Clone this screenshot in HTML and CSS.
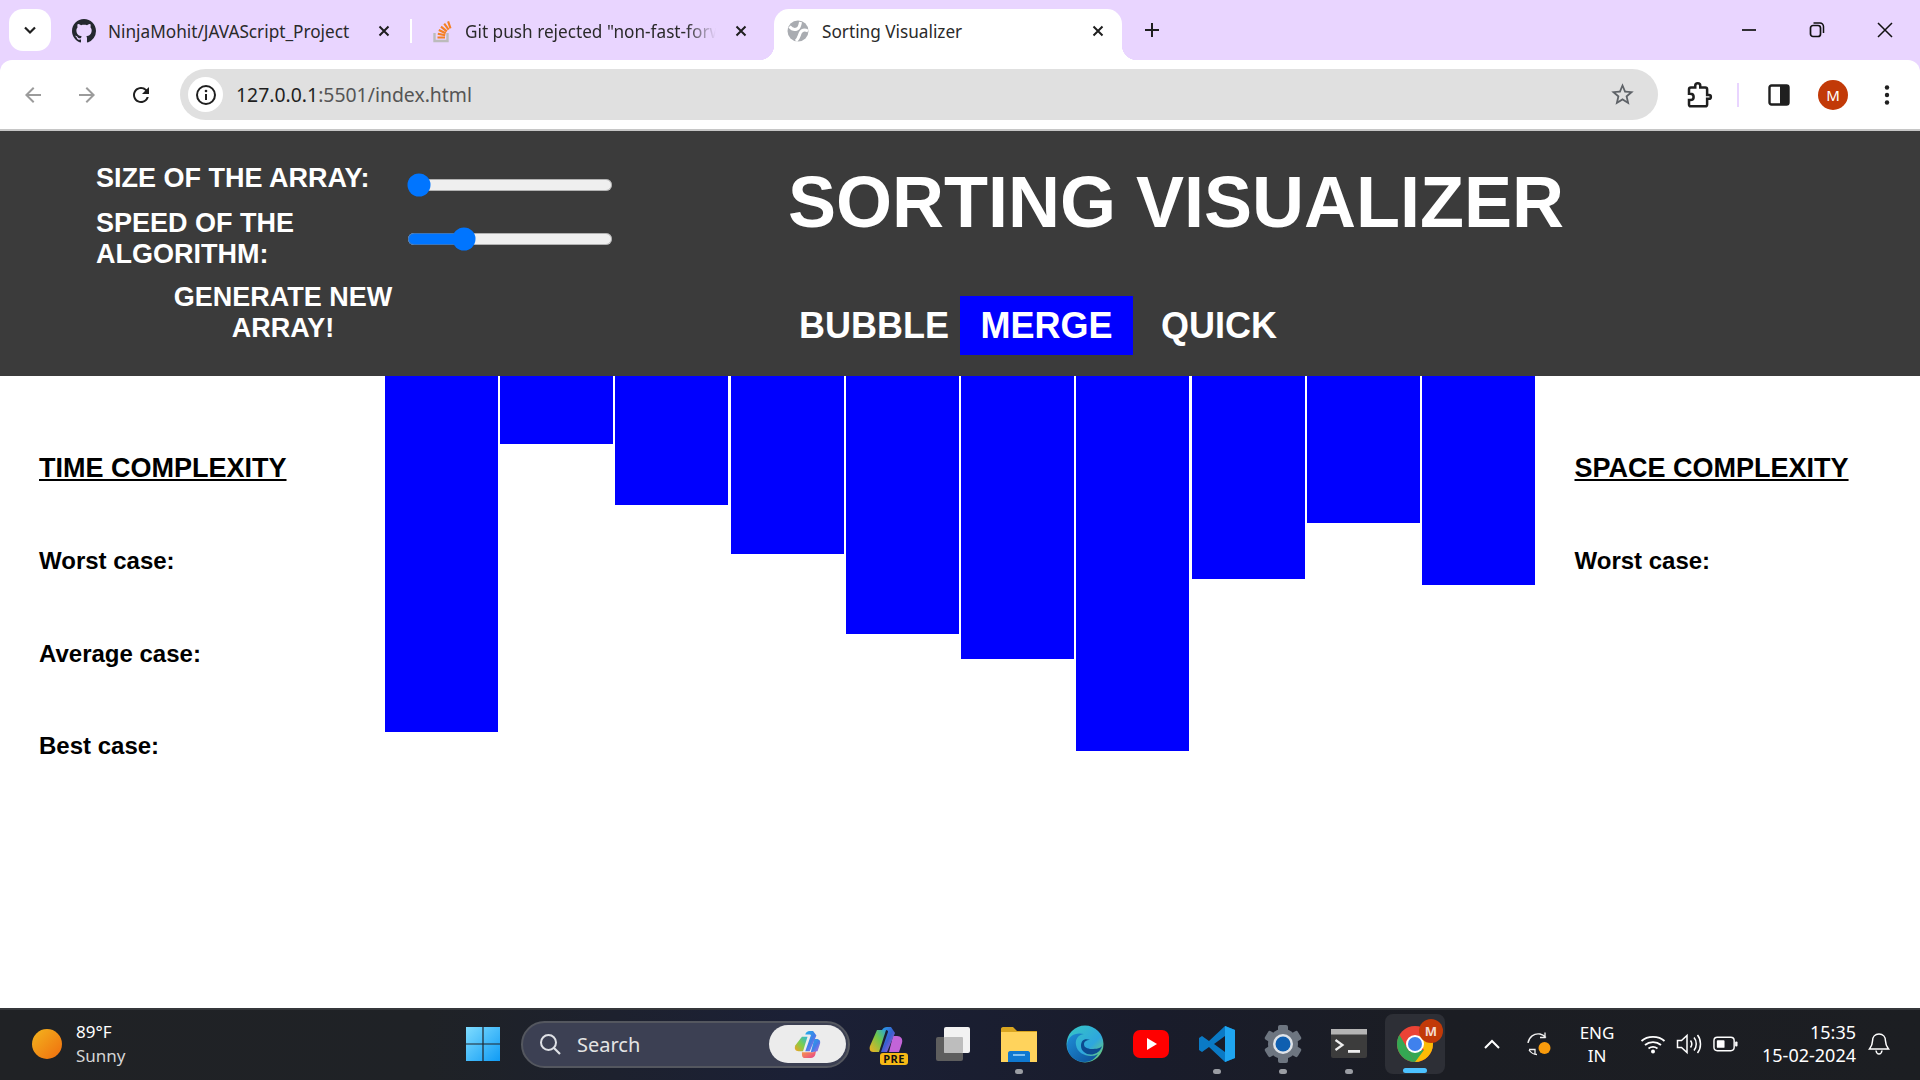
FILE: index.html
```html
<!DOCTYPE html>
<html lang="en">
<head>
<meta charset="utf-8">
<title>Sorting Visualizer</title>
<link rel="stylesheet" href="styles.css">
</head>
<body>
<div class="window">
  <div class="tabstrip">
    <button class="tab-search"><svg class="ic-16" viewBox="0 0 16 16"><path d="M3 5.500 8 10.500 13 5.500" fill="none" stroke="#1f1f1f" stroke-width="2.200"/></svg></button>
    <div class="tab tab-one">
      <svg class="favicon-gh" viewBox="0 0 16 16"><path fill="#24292f" d="M8 0C3.58 0 0 3.58 0 8c0 3.54 2.29 6.53 5.47 7.59.4.07.55-.17.55-.38 0-.19-.01-.82-.01-1.49-2.01.37-2.53-.49-2.69-.94-.09-.23-.48-.94-.82-1.13-.28-.15-.68-.52-.01-.53.63-.01 1.08.58 1.23.82.72 1.21 1.87.87 2.33.66.07-.52.28-.87.51-1.07-1.78-.2-3.64-.89-3.64-3.95 0-.87.31-1.59.82-2.15-.08-.2-.36-1.02.08-2.12 0 0 .67-.21 2.2.82.64-.18 1.32-.27 2-.27.68 0 1.36.09 2 .27 1.53-1.04 2.2-.82 2.2-.82.44 1.1.16 1.92.08 2.12.51.56.82 1.27.82 2.15 0 3.07-1.87 3.75-3.65 3.95.29.25.54.73.54 1.48 0 1.07-.01 1.93-.01 2.2 0 .21.15.46.55.38A8.013 8.013 0 0016 8c0-4.42-3.58-8-8-8z"/></svg>
      <span class="tab-title">NinjaMohit/JAVAScript_Project</span>
      <svg class="tab-close" viewBox="0 0 12 12"><path d="M1.500 1.500 10.500 10.500M10.500 1.500 1.500 10.500" stroke="#1f1f1f" stroke-width="2"/></svg>
    </div>
    <div class="tab tab-two">
      <svg class="favicon-so" viewBox="0 0 20 24"><path d="M3 14v8h13v-8" fill="none" stroke="#bcbbbb" stroke-width="2.400"/><path d="M6 18.500h7.500M6.300 14.800l7.400 1.500M7.300 11l6.900 3.200M9.500 7.600l5.800 4.800M12.700 4.600l4.400 6M16.600 2.300l2.400 7" stroke="#f48024" stroke-width="2.100" fill="none"/></svg>
      <span class="tab-title tab-title-fade">Git push rejected "non-fast-forward"</span>
      <svg class="tab-close" viewBox="0 0 12 12"><path d="M1.500 1.500 10.500 10.500M10.500 1.500 1.500 10.500" stroke="#1f1f1f" stroke-width="2"/></svg>
    </div>
    <div class="tab tab-active">
      <svg class="favicon-globe" viewBox="0 0 22 22"><circle cx="11" cy="11" r="10.500" fill="#a9acb1"/><path d="M2.500 6.500c2.500 3 5 3.500 7.500 2.500s3-3.500 3.500-7M21 11c-3-1.500-6-1-7.500 1.500S12.500 17.500 9 21" fill="none" stroke="#fff" stroke-width="3"/></svg>
      <span class="tab-title">Sorting Visualizer</span>
      <svg class="tab-close" viewBox="0 0 12 12"><path d="M1.500 1.500 10.500 10.500M10.500 1.500 1.500 10.500" stroke="#1f1f1f" stroke-width="2"/></svg>
    </div>
    <button class="new-tab"><svg class="ic-16" viewBox="0 0 16 16"><path d="M8 1v14M1 8h14" stroke="#1f1f1f" stroke-width="2"/></svg></button>
    <div class="win-controls">
      <span class="win-btn"><svg class="ic-16" viewBox="0 0 16 16"><path d="M1 8h14" stroke="#111" stroke-width="1.700"/></svg></span>
      <span class="win-btn"><svg class="ic-16" viewBox="0 0 16 16"><rect x="1.500" y="3.500" width="10" height="11" rx="2.500" fill="none" stroke="#111" stroke-width="1.700"/><path d="M4.500 1h6.500a3.500 3.500 0 0 1 3.500 3.500V11" fill="none" stroke="#111" stroke-width="1.500"/></svg></span>
      <span class="win-btn"><svg class="ic-16" viewBox="0 0 16 16"><path d="M1 1 15 15M15 1 1 15" stroke="#111" stroke-width="1.500"/></svg></span>
    </div>
  </div>

  <div class="toolbar">
    <span class="tool-btn"><svg class="ic-24" viewBox="0 0 24 24"><path fill="#9b9b9b" d="M20 11H7.830l5.590-5.590L12 4l-8 8 8 8 1.410-1.410L7.830 13H20v-2z"/></svg></span>
    <span class="tool-btn"><svg class="ic-24" viewBox="0 0 24 24"><path fill="#9b9b9b" d="M4 11h12.170l-5.590-5.590L12 4l8 8-8 8-1.410-1.410L16.170 13H4v-2z"/></svg></span>
    <span class="tool-btn"><svg class="ic-24" viewBox="0 0 24 24"><path fill="#1f1f1f" d="M17.650 6.350A7.958 7.958 0 0012 4c-4.420 0-7.990 3.580-7.990 8s3.570 8 7.990 8c3.730 0 6.840-2.550 7.730-6h-2.080A5.990 5.990 0 0112 18c-3.310 0-6-2.690-6-6s2.690-6 6-6c1.660 0 3.140.690 4.220 1.780L13 11h7V4l-2.350 2.350z"/></svg></span>
    <div class="omnibox">
      <span class="site-info"><svg class="ic-22" viewBox="0 0 22 22"><circle cx="11" cy="11" r="9" fill="none" stroke="#1f1f1f" stroke-width="2"/><path d="M11 10v6" stroke="#1f1f1f" stroke-width="2"/><circle cx="11" cy="7" r="1.300" fill="#1f1f1f"/></svg></span>
      <span class="url"><span class="url-host">127.0.0.1</span>:5501/index.html</span>
      <svg class="ic-star" viewBox="0 0 24 24"><path fill="#5f6368" d="M22 9.240l-7.190-.620L12 2 9.190 8.630 2 9.240l5.460 4.730L5.820 21 12 17.270 18.180 21l-1.630-7.030L22 9.240zM12 15.400l-3.760 2.270 1-4.280-3.320-2.880 4.380-.380L12 6.100l1.710 4.040 4.380.380-3.320 2.880 1 4.280L12 15.400z"/></svg>
    </div>
    <span class="tool-btn"><svg class="ic-28" viewBox="0 0 24 24"><path fill="none" stroke="#1f1f1f" stroke-width="2" d="M20 12h-1.500V7.500c0-.8-.7-1.500-1.500-1.500h-4V4.500a2 2 0 0 0-4 0V6H5.500C4.700 6 4 6.700 4 7.500V11h1c1.500 0 2.700 1 2.700 2.500S6.500 16 5 16H4v3.500c0 .8.700 1.500 1.500 1.500H17c.8 0 1.500-.7 1.500-1.500V15H20a1.500 1.500 0 0 0 0-3z"/></svg></span>
    <span class="tool-sep"></span>
    <span class="tool-btn"><svg class="ic-24" viewBox="0 0 24 24"><rect x="2.500" y="2.500" width="19" height="19" rx="2" fill="none" stroke="#1f1f1f" stroke-width="2.400"/><rect x="13" y="3" width="8" height="18" fill="#1f1f1f"/></svg></span>
    <span class="tool-btn"><span class="avatar">M</span></span>
    <span class="tool-btn"><svg class="ic-24" viewBox="0 0 24 24"><circle cx="12" cy="4.500" r="2.200" fill="#1f1f1f"/><circle cx="12" cy="12" r="2.200" fill="#1f1f1f"/><circle cx="12" cy="19.500" r="2.200" fill="#1f1f1f"/></svg></span>
  </div>

  <header class="app-header">
    <div class="controls">
      <label class="ctl-label" for="size">SIZE OF THE ARRAY:</label>
      <input class="ctl-range ctl-range-size" id="size" type="range" min="0" max="100" value="0">
      <label class="ctl-label" for="speed">SPEED OF THE ALGORITHM:</label>
      <input class="ctl-range ctl-range-speed" id="speed" type="range" min="0" max="100" value="25">
      <button class="generate">GENERATE NEW ARRAY!</button>
    </div>
    <div class="center">
      <h1 class="title">SORTING VISUALIZER</h1>
      <nav class="algos">
        <button class="algo">BUBBLE</button>
        <button class="algo algo-active">MERGE</button>
        <button class="algo">QUICK</button>
      </nav>
    </div>
  </header>

  <main class="stage">
    <section class="stats stats-left">
      <h3 class="stats-title">TIME COMPLEXITY</h3>
      <p class="stats-row">Worst case:</p>
      <p class="stats-row">Average case:</p>
      <p class="stats-row">Best case:</p>
    </section>
    <section class="bars">
      <div class="bar" style="height:356px"></div>
      <div class="bar" style="height:68px"></div>
      <div class="bar" style="height:129px"></div>
      <div class="bar" style="height:178px"></div>
      <div class="bar" style="height:258px"></div>
      <div class="bar" style="height:283px"></div>
      <div class="bar" style="height:375px"></div>
      <div class="bar" style="height:203px"></div>
      <div class="bar" style="height:147px"></div>
      <div class="bar" style="height:209px"></div>
    </section>
    <section class="stats stats-right">
      <h3 class="stats-title">SPACE COMPLEXITY</h3>
      <p class="stats-row">Worst case:</p>
    </section>
  </main>

  <footer class="taskbar">
    <div class="weather">
      <span class="sun"></span>
      <div class="weather-text"><span class="temp">89°F</span><span class="cond">Sunny</span></div>
    </div>
    <span class="task-cell"><svg class="ic-36" viewBox="0 0 36 36"><defs><linearGradient id="winA" x1="0" y1="0" x2="1" y2="1"><stop offset="0" stop-color="#7fdcff"/><stop offset="1" stop-color="#0f9bf5"/></linearGradient></defs><path fill="url(#winA)" d="M1 1h16.400v16.400H1zM18.600 1H35v16.400H18.600zM1 18.600h16.400V35H1zM18.600 18.600H35V35H18.600z"/></svg></span>
    <div class="search">
      <svg class="ic-search" viewBox="0 0 24 24"><circle cx="10.500" cy="10.500" r="7.500" fill="none" stroke="#dfe1e6" stroke-width="2"/><path d="M16 16l6 6" stroke="#dfe1e6" stroke-width="2.200"/></svg>
      <span class="search-text">Search</span>
      <span class="copilot-pill"><svg class="ic-copilot" viewBox="0 0 26 26"><defs><linearGradient id="cpA" x1="0" y1="0" x2="1" y2="1"><stop offset="0" stop-color="#1fb0ec"/><stop offset=".5" stop-color="#3f7fe8"/><stop offset="1" stop-color="#c95fe0"/></linearGradient><linearGradient id="cpB" x1="0" y1="1" x2="1" y2="0"><stop offset="0" stop-color="#f5a01f"/><stop offset=".5" stop-color="#7ccf4c"/><stop offset="1" stop-color="#2ab5dd"/></linearGradient><linearGradient id="cpC" x1="0" y1="0" x2="1" y2="1"><stop offset="0" stop-color="#f8a83d"/><stop offset="1" stop-color="#e8408e"/></linearGradient></defs><path fill="url(#cpB)" d="M8 6h5l-4 13H5C2 19 1 17 2 14z"/><path fill="url(#cpC)" d="M8 20h9c2 0 3-1 4-3l-1 5c-.5 2-2 3-4 3h-6c-2 0-2-3-2-5z"/><path fill="url(#cpA)" d="M19 8h2c3 0 4 2 3 5l-2 6-6 1z"/><path fill="url(#cpA)" d="M11 4c.5-1.500 2-3 4-3h3l3 4-6 14h-4l5-14c.3-1-.5-1-2-1z"/></svg></span>
    </div>
    <span class="task-cell"><span class="copilot-pre"><svg class="ic-36" viewBox="0 0 36 36"><defs><linearGradient id="cp2A" x1="0" y1="0" x2="1" y2="1"><stop offset="0" stop-color="#22a7ea"/><stop offset=".5" stop-color="#3a5fd0"/><stop offset="1" stop-color="#c65fdc"/></linearGradient><linearGradient id="cp2B" x1="0" y1="1" x2="1" y2="0"><stop offset="0" stop-color="#f5b01f"/><stop offset=".6" stop-color="#6cc74c"/><stop offset="1" stop-color="#2aa5dd"/></linearGradient></defs><path fill="url(#cp2B)" d="M8 4h9L10 26H4C1 26 0 23 1 20z"/><path fill="#c264d8" d="M24 10h4c4 0 6 3 5 7l-3 9H20z"/><path fill="url(#cp2A)" d="M13 4c1-2 3-3 5-3h4l4 6-8 19h-6l7-20c.3-1-.500-2-2-2z"/></svg><span class="pre-badge">PRE</span></span></span>
    <span class="task-cell"><svg class="ic-36" viewBox="0 0 36 36"><rect x="1" y="11" width="27" height="24" rx="2" fill="#5e5e5e"/><rect x="9" y="1" width="26" height="26" rx="2" fill="#f2f2f2"/><rect x="9" y="11" width="19" height="16" rx="1" fill="#bdbdbd"/></svg></span>
    <span class="task-cell task-open"><svg class="ic-36" viewBox="0 0 36 36"><path fill="#d9a520" d="M0 3c0-1 .700-2 2-2h10l4 4h20v6H0z"/><path fill="#ffd35c" d="M0 6h36v30H0z"/><path fill="#0f78d0" d="M7 36V27c0-1 1-2 2-2h18c1 0 2 1 2 2v9z"/><rect x="12" y="28" width="12" height="2" fill="#7fc0f0"/></svg></span>
    <span class="task-cell"><svg class="ic-38" viewBox="0 0 38 38"><defs><linearGradient id="edA" x1="0" y1="0" x2="1" y2="1"><stop offset="0" stop-color="#37c8c2"/><stop offset=".6" stop-color="#2ea6de"/><stop offset="1" stop-color="#7ed957"/></linearGradient><linearGradient id="edB" x1="0" y1="0" x2="1" y2="1"><stop offset="0" stop-color="#1f8fd8"/><stop offset="1" stop-color="#0c4f97"/></linearGradient></defs><circle cx="19" cy="19" r="18.500" fill="url(#edA)"/><path fill="url(#edB)" d="M1 20C2 10 10 7 18 9c-6 1-9 5-8 11 1 7 8 11 15 11 3 0 5-1 7-2-3 5-8 8-13 8C9 37 1 30 1 20z"/><path fill="#0c4a8f" d="M36 21c-2 3-8 3-12 3-4-1-6-2-6-5 0-2 2-4 6-4-6-2-9 1-9 6 0 6 7 10 13 8 4-1 7-4 8-8z"/></svg></span>
    <span class="task-cell"><svg class="ic-36" viewBox="0 0 36 28"><rect x="0" y="0" width="36" height="28" rx="7" fill="#f00"/><path d="M14 8v12l10-6z" fill="#fff"/></svg></span>
    <span class="task-cell task-open"><svg class="ic-36" viewBox="0 0 36 36"><path fill="#0a7ac5" d="M26 0 10 15 3 10 0 12v12l3 2 7-5 16 15 10-4V4zM26 10v16l-11-8z"/><path fill="#1fa5f0" d="M26 0l10 4v28l-10 4z"/></svg></span>
    <span class="task-cell task-open"><svg class="ic-38" viewBox="0 0 38 38"><g fill="#6d7580"><circle cx="19" cy="19" r="15"/><rect x="14" y="0" width="10" height="38" rx="2"/><rect x="14" y="0" width="10" height="38" rx="2" transform="rotate(60 19 19)"/><rect x="14" y="0" width="10" height="38" rx="2" transform="rotate(120 19 19)"/></g><circle cx="19" cy="19" r="10" fill="#dfe3e8"/><circle cx="19" cy="19" r="7.500" fill="#0f5fb0"/></svg></span>
    <span class="task-cell task-open"><svg class="ic-36" viewBox="0 0 36 30"><rect width="36" height="29" rx="2" fill="#3c3c3c"/><rect width="36" height="5.500" fill="#b4b4b4"/><path d="M4.500 11l7 5-7 5" fill="none" stroke="#eee" stroke-width="2.200"/><rect x="17" y="21" width="12" height="2.800" fill="#eee"/></svg></span>
    <span class="task-cell task-chrome">
      <svg class="ic-38" viewBox="0 0 38 38"><circle cx="19" cy="19" r="18" fill="#eb4335"/><path fill="#34a853" d="M3.400 10 19 37c-10 0-18-8-18-18 0-3.300.8-6.400 2.400-9z"/><path fill="#34a853" d="M3.400 10 12 25l7 12h2L28 25 10 25z"/><path fill="#fbbc05" d="M19 37c10 0 18-8 18-18 0-3.300-.8-5-2-8H19l9 14z"/><circle cx="19" cy="19" r="9" fill="#fff"/><circle cx="19" cy="19" r="7" fill="#3f81ed"/></svg>
      <span class="chrome-badge">M</span>
    </span>
    <div class="tray">
      <svg class="tray-chev" viewBox="0 0 18 12"><path d="M2 10 9 3l7 7" fill="none" stroke="#fff" stroke-width="2"/></svg>
      <span class="tray-sync"><svg class="ic-26" viewBox="0 0 26 26"><path d="M2 12C3 6 8 2 14 3c2 .3 4 1.500 6 3.500M19 1.500v5h-5M3 18.500h6v5M3 19c2 3 5 4.500 8 4.500" fill="none" stroke="#f1f1f1" stroke-width="1.300"/><circle cx="18.500" cy="17" r="6" fill="#f99b0c"/></svg></span>
      <div class="lang"><span>ENG</span><span>IN</span></div>
      <svg class="tray-wifi" viewBox="0 0 26 20"><path d="M1.500 7C7.500 1.500 18.500 1.500 24.500 7M5 11c4.500-3.800 11.500-3.800 16 0M8.500 14.500c2.600-1.800 6.400-1.800 9 0" fill="none" stroke="#fff" stroke-width="1.800"/><circle cx="13" cy="17.500" r="2" fill="#fff"/></svg>
      <svg class="tray-vol" viewBox="0 0 26 22"><path d="M1.500 7.500h4L11 2.500v17l-5.500-5h-4z" fill="none" stroke="#fff" stroke-width="1.500"/><path d="M14.500 7.500c1.500 2 1.500 5 0 7M18 4.500c3 3.500 3 9.500 0 13M21.500 2c4 5 4 13 0 18" fill="none" stroke="#fff" stroke-width="1.500"/></svg>
      <svg class="tray-bat" viewBox="0 0 26 18"><rect x="1" y="2" width="21" height="14" rx="3.500" fill="none" stroke="#fff" stroke-width="1.500"/><rect x="4" y="5" width="8" height="8" rx="1" fill="#fff"/><rect x="23" y="6.500" width="2.500" height="5" rx="1" fill="#fff"/></svg>
      <div class="clock"><span>15:35</span><span>15-02-2024</span></div>
      <svg class="tray-bell" viewBox="0 0 22 24"><path d="M11 2c-4 0-6.500 3-6.500 7 0 4-1.500 6-3 8h19c-1.500-2-3-4-3-8 0-4-2.500-7-6.500-7zM8 18.500c.3 2 1.500 3.500 3 3.500s2.700-1.500 3-3.500" fill="none" stroke="#fff" stroke-width="1.500"/></svg>
    </div>
  </footer>
</div>
</body>
</html>
```
FILE: styles.css
```css
* { box-sizing: border-box; }
html, body { margin: 0; padding: 0; height: 100%; }
body { font-family: "Liberation Sans", Arial, sans-serif; overflow: hidden; background: #fff; }
button { border: 0; background: none; padding: 0; font: inherit; color: inherit; }
svg { display: block; flex: none; }
.window { display: flex; flex-direction: column; height: 1080px; width: 1920px; background: #e9d5ff; }

/* ---------- browser tabs ---------- */
.tabstrip { display: flex; height: 60px; flex: none; padding: 9px 0 0 9px; font-family: "Noto Sans", "Open Sans", sans-serif; color: #2a2a2a; }
.ic-16 { width: 16px; height: 16px; }
.tab-search { width: 42px; height: 42px; border-radius: 14px; background: #fff; display: flex; align-items: center; justify-content: center; margin-right: 9px; }
.tab { display: flex; align-items: center; height: 51px; padding-bottom: 7px; position: relative; font-size: 17.2px; }
.tab-one { width: 352px; padding-left: 12px; padding-right: 22px; }
.tab-one::after { content: ""; position: absolute; right: 0; top: 10px; height: 24px; width: 2px; background: #fff; }
.tab-two { width: 362px; padding-left: 19px; padding-right: 27px; }
.tab-two .tab-close { margin-left: 19px; }
.tab-two .favicon-so { margin-right: 13px; }
.tab-active { width: 348px; padding-left: 13px; padding-right: 18px; background: #fff; border-radius: 15px 15px 0 0; }
.tab-active::before, .tab-active::after { content: ""; position: absolute; bottom: 0; width: 15px; height: 15px; }
.tab-active::before { left: -15px; background: radial-gradient(circle at 0 0, #e9d5ff 15px, #fff 15.5px); }
.tab-active::after { right: -15px; background: radial-gradient(circle at 100% 0, #e9d5ff 15px, #fff 15.5px); }
.favicon-gh { width: 24px; height: 24px; margin-right: 12px; }
.favicon-so { width: 21px; height: 24px; margin-right: 12px; }
.favicon-globe { width: 22px; height: 22px; margin-right: 13px; }
.tab-title { flex: 1; min-width: 0; white-space: nowrap; overflow: hidden; }
.tab-title-fade { -webkit-mask-image: linear-gradient(90deg, #000 88%, transparent 100%); mask-image: linear-gradient(90deg, #000 88%, transparent 100%); }
.tab-close { width: 12px; height: 12px; margin-left: 10px; }
.new-tab { width: 36px; height: 42px; margin-left: 12px; display: flex; align-items: center; justify-content: center; }
.win-controls { display: flex; margin-left: auto; height: 42px; margin-right: 1px; }
.win-btn { width: 68px; display: flex; align-items: center; justify-content: center; }

/* ---------- toolbar ---------- */
.toolbar { display: flex; align-items: center; height: 71px; flex: none; padding: 0 6px; background: #fff; border-bottom: 2px solid #c6c6c6; border-radius: 12px 12px 0 0; }
.ic-24 { width: 24px; height: 24px; }
.ic-22 { width: 22px; height: 22px; }
.ic-28 { width: 30px; height: 30px; }
.ic-26 { width: 26px; height: 26px; }
.ic-36 { width: 36px; height: 36px; }
.ic-38 { width: 38px; height: 38px; }
.ic-copilot { width: 29px; height: 29px; }
.tool-btn { width: 54px; height: 54px; display: flex; align-items: center; justify-content: center; flex: none; }
.omnibox { flex: 1; display: flex; align-items: center; height: 51px; margin: 0 14px 0 12px; padding: 0 22px 0 8px; border-radius: 26px; background: #e0e0e0; font-family: "Noto Sans", "Open Sans", sans-serif; font-size: 19.4px; color: #555; }
.site-info { width: 35px; height: 35px; border-radius: 50%; background: #fff; display: flex; align-items: center; justify-content: center; margin-right: 13px; }
.url { flex: 1; white-space: nowrap; }
.url-host { color: #1f1f1f; }
.ic-star { width: 27px; height: 27px; }
.tool-sep { width: 2px; height: 24px; background: #e9d5ff; margin: 0 13px 0 11px; flex: none; }
.avatar { width: 30px; height: 30px; border-radius: 50%; background: #c23a08; color: #fff; font-family: "Noto Sans", sans-serif; font-size: 15px; display: flex; align-items: center; justify-content: center; }

/* ---------- app header ---------- */
.app-header { display: flex; height: 245px; flex: none; padding-left: 96px; background: #3b3b3b; color: #fff; }
.controls { width: 517px; display: grid; grid-template-columns: 311px 1fr; grid-auto-rows: min-content; column-gap: 0; padding-top: 31.5px; align-content: start; }
.ctl-label { font-size: 27px; font-weight: 700; line-height: 31px; margin-bottom: 14px; }
.ctl-range { zoom: 1.5; width: 137px; margin: 0; height: 16px; accent-color: #0075ff; }
.ctl-range-size { margin-top: 7px; }
.ctl-range-speed { margin-top: 13px; }
.generate { grid-column: 1; justify-self: end; width: 240px; margin-right: 4px; font-size: 27px; font-weight: 700; line-height: 31px; color: #fff; text-align: center; margin-top: -2px; }
.center { width: 1126px; }
.title { margin: 0; padding-top: 30px; font-size: 72px; font-weight: 700; line-height: 83px; text-align: center; white-space: nowrap; }
.algos { display: flex; align-items: center; margin-top: 52px; padding-left: 186px; }
.algo { font-size: 36px; font-weight: 700; color: #fff; line-height: 59px; height: 59px; }
.algo-active { background: #00f; padding: 0 20.5px; margin: 0 28px 0 11px; }

/* ---------- stage ---------- */
.stage { flex: 1; display: flex; background: #fff; min-height: 0; }
.stats { display: flex; flex-direction: column; gap: 65px; padding-top: 77px; color: #000; }
.stats-left { width: 385px; padding-left: 39px; }
.stats-right { flex: 1; padding-left: 39.5px; }
.stats-title { margin: 0 0 -2px; font-size: 27px; font-weight: 700; line-height: 31px; text-decoration: underline; }
.stats-row { margin: 0; font-size: 24px; font-weight: 700; line-height: 27.5px; }
.bars { width: 1150px; display: flex; justify-content: space-between; align-items: flex-start; flex: none; }
.bar { width: 113px; background: #00f; }

/* ---------- taskbar ---------- */
.taskbar { display: flex; align-items: center; height: 72px; flex: none; padding-bottom: 2px; border-top: 2px solid #35373b; background: linear-gradient(90deg, #202225 0, #1f2226 22%, #1b2036 42%, #191c2b 60%, #1b1d23 75%, #1c1e22 100%); color: #fff; font-family: "Noto Sans", "Open Sans", sans-serif; }
.weather { width: 450px; display: flex; align-items: center; padding-left: 32px; flex: none; }
.sun { width: 30px; height: 30px; border-radius: 50%; background: linear-gradient(135deg, #f3b51e, #f06d0e); margin-right: 14px; }
.weather-text { display: flex; flex-direction: column; font-size: 17px; line-height: 24px; }
.cond { color: #d5d5d5; }
.task-cell { width: 66px; height: 60px; display: flex; align-items: center; justify-content: center; flex: none; position: relative; }
.task-open::after { content: ""; position: absolute; bottom: 0; left: 29px; width: 8px; height: 5px; border-radius: 3px; background: #9a9da3; }
.search { width: 329px; height: 47px; margin: 0 4px 0 5px; flex: none; display: flex; align-items: center; padding: 0 2px 0 15px; border-radius: 24px; background: #3c4053; border: 2px solid #54575f; }
.ic-search { width: 24px; height: 24px; margin-right: 15px; }
.search-text { flex: 1; font-size: 20px; color: #e4e4e4; }
.copilot-pill { width: 77px; height: 38px; border-radius: 19px; background: #ececec; display: flex; align-items: center; justify-content: center; }
.copilot-pre { position: relative; display: block; width: 36px; height: 36px; }
.pre-badge { position: absolute; right: -3px; bottom: -3px; background: #f7b916; color: #111; font-size: 11px; font-weight: 700; line-height: 12px; padding: 0 3px; border-radius: 3px; letter-spacing: .5px; }
.task-chrome { background: #2d2f36; border-radius: 8px; height: 60px; width: 60px; margin-left: 3px; }
.task-chrome::after { content: ""; position: absolute; bottom: 1px; left: 18px; width: 24px; height: 5px; border-radius: 3px; background: #4cc2ff; }
.chrome-badge { position: absolute; top: 5px; right: 2px; width: 24px; height: 24px; border-radius: 50%; background: #c23a08; color: #f4d9cf; font-size: 13px; font-weight: 700; display: flex; align-items: center; justify-content: center; }
.tray { flex: 1; display: flex; align-items: center; padding-left: 37.5px; }
.tray-chev { width: 18px; height: 12px; margin-right: 25px; }
.tray-sync { margin-right: 19.5px; }
.lang { width: 52px; display: flex; flex-direction: column; align-items: center; font-size: 17px; line-height: 23px; margin-right: 17px; }
.tray-wifi { width: 26px; height: 20px; margin-right: 10px; }
.tray-vol { width: 26px; height: 22px; margin-right: 11px; }
.tray-bat { width: 25px; height: 18px; margin-right: 23px; }
.clock { width: 95px; display: flex; flex-direction: column; align-items: flex-end; font-size: 18px; line-height: 23px; white-space: nowrap; }
.tray-bell { width: 22px; height: 24px; margin-left: 12px; }
```
